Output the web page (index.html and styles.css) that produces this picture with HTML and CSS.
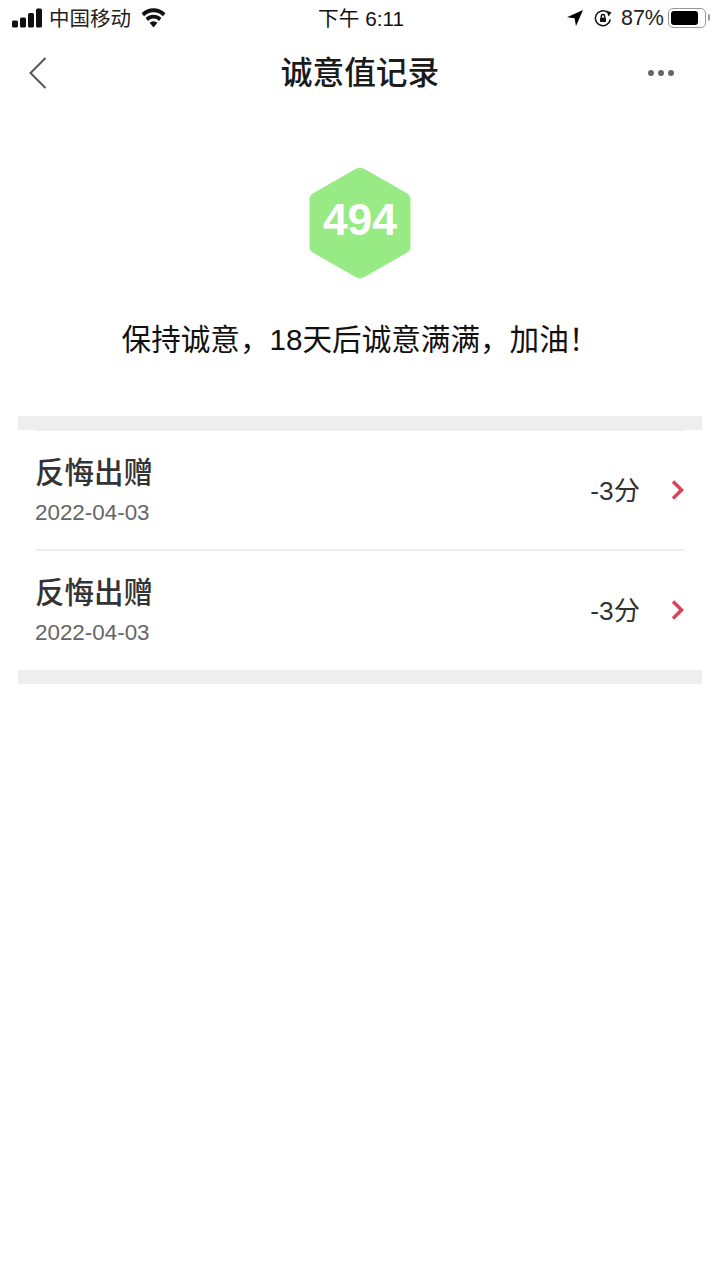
FILE: index.html
```html
<!DOCTYPE html>
<html lang="zh">
<head>
<meta charset="utf-8">
<title>诚意值记录</title>
<link rel="stylesheet" href="styles.css">
</head>
<body>
<div class="status">
  <div class="status-side">
    <svg class="signal" width="31" height="20" viewBox="0 0 31 20"><rect x="0" y="12.500" width="6" height="7" rx="1.500"/><rect x="8" y="9.500" width="6" height="10" rx="1.500"/><rect x="16" y="5" width="6" height="14.500" rx="1.500"/><rect x="24" y="0.500" width="6" height="19" rx="1.500"/></svg>
    <span class="carrier">中国移动</span>
    <svg class="wifi" width="25" height="20" viewBox="0 0 27 20" preserveAspectRatio="none"><path d="M13.500 19.500 9.300 14.800a6.300 6.300 0 0 1 8.400 0z"/><path d="M7.500 12.900 5 10.100a12.700 12.700 0 0 1 17 0l-2.500 2.800a9 9 0 0 0-12 0z"/><path d="M3.300 8.200.6 5.200a19.200 19.200 0 0 1 25.800 0l-2.700 3a15.200 15.200 0 0 0-20.400 0z"/></svg>
  </div>
  <div class="clock">下午 6:11</div>
  <div class="status-side status-right">
    <svg width="16" height="16" viewBox="0 0 16 16"><path d="M16 0 0 7.200l7.600 1.100L9 16z"/></svg>
    <svg class="lock" width="20" height="20" viewBox="0 0 20 20"><path class="ring" d="M17.300 11.500A7.500 7.500 0 1 1 14.500 4.300"/><path d="M13.500 2.500 18.500 4.500 15.500 8.500z"/><rect x="7" y="9.500" width="6" height="4.500" rx="0.700"/><path class="shackle" d="M8.300 9.500V8.200a1.700 1.700 0 0 1 3.400 0V9.500"/></svg>
    <span class="percent">87%</span>
    <div class="battery"><div class="battery-level"></div></div>
    <div class="battery-cap"></div>
  </div>
</div>

<header class="nav">
  <svg class="nav-back" width="18" height="32" viewBox="0 0 18 32"><path d="M16.500 1 1.500 16l15 15"/></svg>
  <h1 class="nav-title">诚意值记录</h1>
  <div class="nav-more"><i></i><i></i><i></i></div>
</header>

<section class="hero">
  <div class="badge">
    <svg width="104" height="114" viewBox="0 0 104 114"><path class="hex" d="M48 2.800Q52 .8 56 2.800L98.500 27Q102.500 29.200 102.500 33.500V80.500Q102.500 84.800 98.500 87L56 111.200Q52 113.200 48 111.200L5.500 87Q1.500 84.800 1.500 80.500V33.500Q1.500 29.200 5.500 27z"/></svg>
    <span class="badge-num">494</span>
  </div>
  <p class="hero-msg">保持诚意，18天后诚意满满，加油！</p>
</section>

<section class="records">
  <div class="record">
    <div class="record-main">
      <div class="record-title">反悔出赠</div>
      <div class="record-date">2022-04-03</div>
    </div>
    <div class="record-score">-3分</div>
    <svg class="record-arrow" width="15" height="22" viewBox="0 0 15 22"><path d="M3 2.500 11.500 11 3 19.500"/></svg>
  </div>
  <div class="record">
    <div class="record-main">
      <div class="record-title">反悔出赠</div>
      <div class="record-date">2022-04-03</div>
    </div>
    <div class="record-score">-3分</div>
    <svg class="record-arrow" width="15" height="22" viewBox="0 0 15 22"><path d="M3 2.500 11.500 11 3 19.500"/></svg>
  </div>
</section>
</body>
</html>
```
FILE: styles.css
```css
* { box-sizing: border-box; }
html, body { margin: 0; padding: 0; }
body {
  width: 720px;
  height: 1280px;
  overflow: hidden;
  background: #fff;
  color: #111;
  font-family: "Liberation Sans", "Noto Sans CJK SC", sans-serif;
}
.status {
  height: 40px;
  padding: 0 10px 5px 12px;
  display: grid;
  grid-template-columns: 1fr auto 1fr;
  align-items: center;
  font-size: 20.500px;
  line-height: 24px;
}
.status-side { display: flex; align-items: center; }
.status-right { justify-content: flex-end; }
.signal { fill: #111; margin-right: 6px; }
.wifi { fill: #111; margin-left: 10px; }
.carrier { color: #222; padding-top: 3px; }
.clock { font-size: 20.700px; color: #111; padding-top: 3px; }
.lock { margin-left: 10px; fill: #111; }
.lock .ring, .lock .shackle { fill: none; stroke: #111; stroke-width: 1.500; }
.percent { margin-left: 8px; color: #222; font-size: 21.500px; }
.battery {
  width: 38px;
  height: 20px;
  margin-left: 4px;
  padding: 2px;
  border: 1.500px solid #999;
  border-radius: 5px;
}
.battery-level { width: 27px; height: 100%; background: #000; border-radius: 3px; }
.battery-cap { width: 2px; height: 7px; margin-left: 2px; background: #999; border-radius: 0 2px 2px 0; }

.nav {
  height: 66px;
  padding: 0 29px;
  display: grid;
  grid-template-columns: 1fr auto 1fr;
  align-items: center;
}
.nav-back { fill: none; stroke: #555; stroke-width: 2; }
.nav-title { margin: 0; padding-bottom: 6px; font-size: 31.700px; font-weight: 500; color: #1a1a1a; }
.nav-more { display: flex; gap: 4px; justify-content: flex-end; padding-right: 17px; }
.nav-more i { width: 6px; height: 6px; border-radius: 50%; background: #666; }

.hero { display: flex; flex-direction: column; align-items: center; padding-top: 60px; }
.badge { position: relative; width: 104px; height: 114px; }
.hex { fill: #98eb84; }
.badge-num {
  position: absolute;
  inset: 0;
  display: flex;
  align-items: center;
  justify-content: center;
  color: #fff;
  font-size: 44.500px;
  font-weight: 700;
  padding-bottom: 7px;
}
.hero-msg { margin: 40px 0 0; font-size: 29.600px; line-height: 40px; height: 40px; color: #111; }

.records {
  margin: 56px 18px 0;
  padding: 0 17px;
  border-top: 14px solid #eeeeee;
  border-bottom: 14px solid #eeeeee;
}
.record {
  height: 121px;
  display: flex;
  align-items: center;
  border-top: 1px solid #eeeeee;
  border-bottom: 2px solid #eeeeee;
}
.record:last-child { height: 119px; padding-bottom: 1px; border: 0; }
.record-main { flex: 1; padding-top: 2px; }
.record-title { font-size: 29.500px; line-height: 40px; font-weight: 500; color: #333; }
.record-date { font-size: 22.400px; line-height: 32px; margin-top: 4px; color: #666; }
.record-score { font-size: 26.300px; color: #333; margin-right: 30px; padding-bottom: 4px; }
.record-arrow { fill: none; stroke: #de4258; stroke-width: 3.500; }
```
